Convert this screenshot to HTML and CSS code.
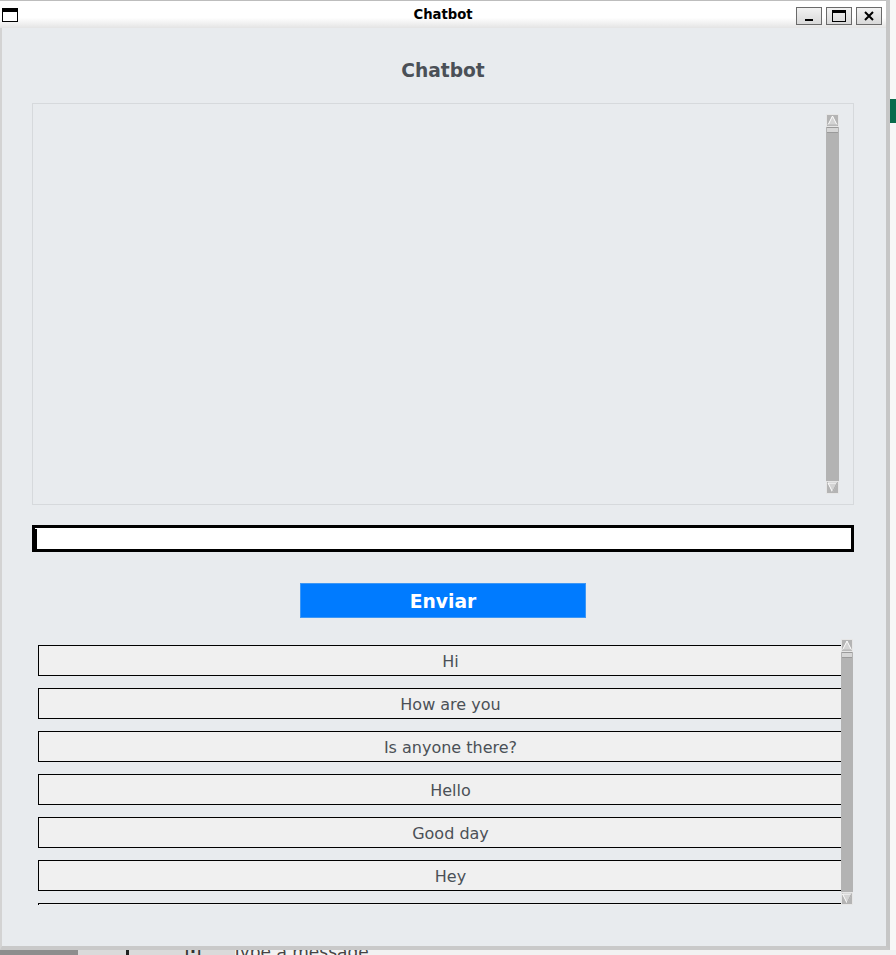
FILE: index.html
```html
<!DOCTYPE html>
<html>
<head>
<meta charset="utf-8">
<link rel="stylesheet" href="styles.css">
</head>
<body>
<div class="desktop">
  <div class="window">
    <div class="titlebar">
      <svg class="appicon" width="16" height="14" viewBox="0 0 16 14"><rect x="0.5" y="0.5" width="15" height="13" fill="#fff" stroke="#000"/><rect x="0" y="0" width="16" height="4" fill="#000"/></svg>
      <span class="wtitle">Chatbot</span>
      <div class="controls">
        <span class="ctl"><svg width="26" height="18" viewBox="0 0 26 18"><rect x="9" y="12" width="8" height="2" fill="#000"/></svg></span>
        <span class="ctl"><svg width="26" height="18" viewBox="0 0 26 18"><rect x="6.5" y="3.5" width="13" height="11" fill="none" stroke="#000"/><rect x="6" y="3" width="14" height="3" fill="#000"/></svg></span>
        <span class="ctl"><svg width="26" height="18" viewBox="0 0 26 18"><path d="M9 5 L17 13 M17 5 L9 13" stroke="#000" stroke-width="2"/></svg></span>
      </div>
    </div>
    <div class="content">
      <h1 class="heading">Chatbot</h1>
      <div class="chatlog">
        <div class="vscroll big">
          <svg class="arrow" width="13" height="13" viewBox="0 0 13 13"><rect x="0.5" y="0.5" width="12" height="12" fill="#b4b4b4" stroke="#e6e6e6"/><polygon points="6.5,2 11,11 2,11" fill="#d4d4d4" stroke="#ffffff"/><path d="M6.5 2 L11 11 L2 11" fill="none" stroke="#8a8a8a" stroke-width="0.8" stroke-dasharray="0 10.1 100"/></svg>
          <div class="thumb"></div>
          <div class="trough"></div>
          <svg class="arrow" width="13" height="13" viewBox="0 0 13 13"><rect x="0.5" y="0.5" width="12" height="12" fill="#b4b4b4" stroke="#e6e6e6"/><polygon points="2,2 11,2 6.5,11" fill="#d4d4d4" stroke="#ffffff"/><path d="M11 2 L6.5 11" fill="none" stroke="#8a8a8a" stroke-width="0.8"/></svg>
        </div>
      </div>
      <div class="entry"><span class="caret"></span></div>
      <div class="sendrow"><button class="send">Enviar</button></div>
      <div class="list">
        <div class="rows">
          <div class="row">Hi</div>
          <div class="row">How are you</div>
          <div class="row">Is anyone there?</div>
          <div class="row">Hello</div>
          <div class="row">Good day</div>
          <div class="row">Hey</div>
          <div class="row"></div>
        </div>
        <div class="vscroll small">
          <svg class="arrow" width="12" height="13" viewBox="0 0 12 13"><rect x="0.5" y="0.5" width="11" height="12" fill="#b4b4b4" stroke="#e6e6e6"/><polygon points="6,2 10.5,11 1.5,11" fill="#d4d4d4" stroke="#ffffff"/><path d="M6 2 L10.5 11 L1.5 11" fill="none" stroke="#8a8a8a" stroke-width="0.8" stroke-dasharray="0 10.1 100"/></svg>
          <div class="thumb"></div>
          <div class="trough"></div>
          <svg class="arrow" width="12" height="13" viewBox="0 0 12 13"><rect x="0.5" y="0.5" width="11" height="12" fill="#b4b4b4" stroke="#e6e6e6"/><polygon points="1.5,2 10.5,2 6,11" fill="#d4d4d4" stroke="#ffffff"/><path d="M10.5 2 L6 11" fill="none" stroke="#8a8a8a" stroke-width="0.8"/></svg>
        </div>
      </div>
    </div>
  </div>
  <div class="greenbar"></div>
  <div class="peek">
    <span class="peek-mark"></span>
    <span class="peek-icon">|:|</span>
    <span class="peek-text">Type a message</span>
  </div>
</div>
</body>
</html>
```

FILE: styles.css
```css
html, body {
  margin: 0;
  padding: 0;
}
body {
  width: 896px;
  height: 955px;
  overflow: hidden;
  background: #f3f3f3;
  font-family: "DejaVu Sans", sans-serif;
}
.desktop {
  position: relative;
  width: 896px;
  height: 955px;
  background: linear-gradient(to right, #f3f3f3 0, #f3f3f3 890px, #f7f7f7 890px);
}
.window {
  width: 884px;
  height: 946px;
  border-left: 2px solid #d3d3d3;
  border-right: 4px solid #c6c6c6;
  border-bottom: 4px solid #c9c9c9;
  background: #e8ebee;
  display: flex;
  flex-direction: column;
}
.titlebar {
  height: 28px;
  flex: none;
  margin-left: -2px;
  border-top: 1px solid #bdbdbd;
  background: linear-gradient(to bottom, #ffffff 0, #ffffff 62%, #e4e4e4 100%);
  display: flex;
  align-items: center;
  position: relative;
  box-sizing: border-box;
}
.appicon {
  margin-left: 2px;
  margin-top: 1px;
}
.wtitle {
  position: absolute;
  left: 0;
  right: 0;
  top: 6px;
  text-align: center;
  font-weight: bold;
  font-size: 13.2px;
  color: #000;
  pointer-events: none;
}
.controls {
  margin-left: auto;
  margin-right: 4px;
  display: flex;
  gap: 4px;
  margin-top: 2px;
}
.ctl {
  width: 26px;
  height: 18px;
  box-sizing: border-box;
  border: 1px solid #6a6a6a;
  background: linear-gradient(to bottom, #f2f2f2, #d9d9d9);
  display: flex;
  align-items: center;
  justify-content: center;
}
.ctl svg {
  display: block;
  margin: -1px;
}
.content {
  width: 822px;
  margin-left: 30px;
  padding-top: 31px;
  display: flex;
  flex-direction: column;
}
.heading {
  margin: 0;
  height: 24px;
  line-height: 24px;
  text-align: center;
  font-size: 18.67px;
  font-weight: bold;
  color: #4b5057;
}
.chatlog {
  margin-top: 20px;
  height: 402px;
  box-sizing: border-box;
  border: 1px solid #d6d9dc;
  background: #e8ebee;
  display: flex;
  justify-content: flex-end;
  padding: 10px 14px 10px 0;
}
.vscroll {
  display: flex;
  flex-direction: column;
  background: #b3b3b3;
  flex: none;
}
.vscroll.big {
  width: 13px;
}
.vscroll.small {
  width: 12px;
  height: 266px;
}
.arrow {
  display: block;
  flex: none;
}
.thumb {
  height: 4px;
  flex: none;
  background: #d6d6d6;
  border-top: 1px solid #9a9a9a;
  border-bottom: 1px solid #9a9a9a;
  margin: 0 1px;
}
.trough {
  flex: 1;
}
.entry {
  margin-top: 20px;
  height: 27px;
  box-sizing: border-box;
  border: 3px solid #000;
  background: #fff;
  display: flex;
  align-items: center;
}
.caret {
  width: 2px;
  height: 20px;
  background: #000;
}
.sendrow {
  margin-top: 31px;
  display: flex;
  justify-content: center;
}
.send {
  width: 286px;
  height: 35px;
  border: 1px solid #3d97f5;
  background: #007bff;
  color: #fff;
  font-family: "DejaVu Sans", sans-serif;
  font-weight: bold;
  font-size: 18.67px;
  padding: 2px 0 0 0;
}
.list {
  margin-top: 21px;
  height: 266px;
  display: flex;
  padding-left: 6px;
  padding-right: 1px;
}
.rows {
  flex: 1;
  padding-top: 6px;
  height: 260px;
  overflow: hidden;
  display: flex;
  flex-direction: column;
  gap: 12px;
}
.row {
  flex: none;
  width: 825px;
  height: 31px;
  box-sizing: border-box;
  border: 1px solid #000;
  background: #f0f0f0;
  color: #4b5057;
  font-size: 16px;
  line-height: 31px;
  text-align: center;
}
.greenbar {
  position: absolute;
  left: 890px;
  top: 99px;
  width: 6px;
  height: 24px;
  background: #0a6b4c;
}
.peek {
  position: absolute;
  left: 0;
  top: 950px;
  width: 896px;
  height: 5px;
  overflow: hidden;
  background: linear-gradient(to right, #8d8d8d 0, #8d8d8d 78px, #dadada 78px, #dadada 235px, #f2f2f2 235px);
}
.peek-mark {
  position: absolute;
  left: 126px;
  top: 0;
  width: 3px;
  height: 5px;
  background: #222;
}
.peek-icon {
  position: absolute;
  left: 184px;
  top: -6px;
  font-size: 16px;
  font-weight: bold;
  color: #333;
}
.peek-text {
  position: absolute;
  left: 232px;
  top: -8px;
  font-size: 17px;
  color: #444;
}
```
